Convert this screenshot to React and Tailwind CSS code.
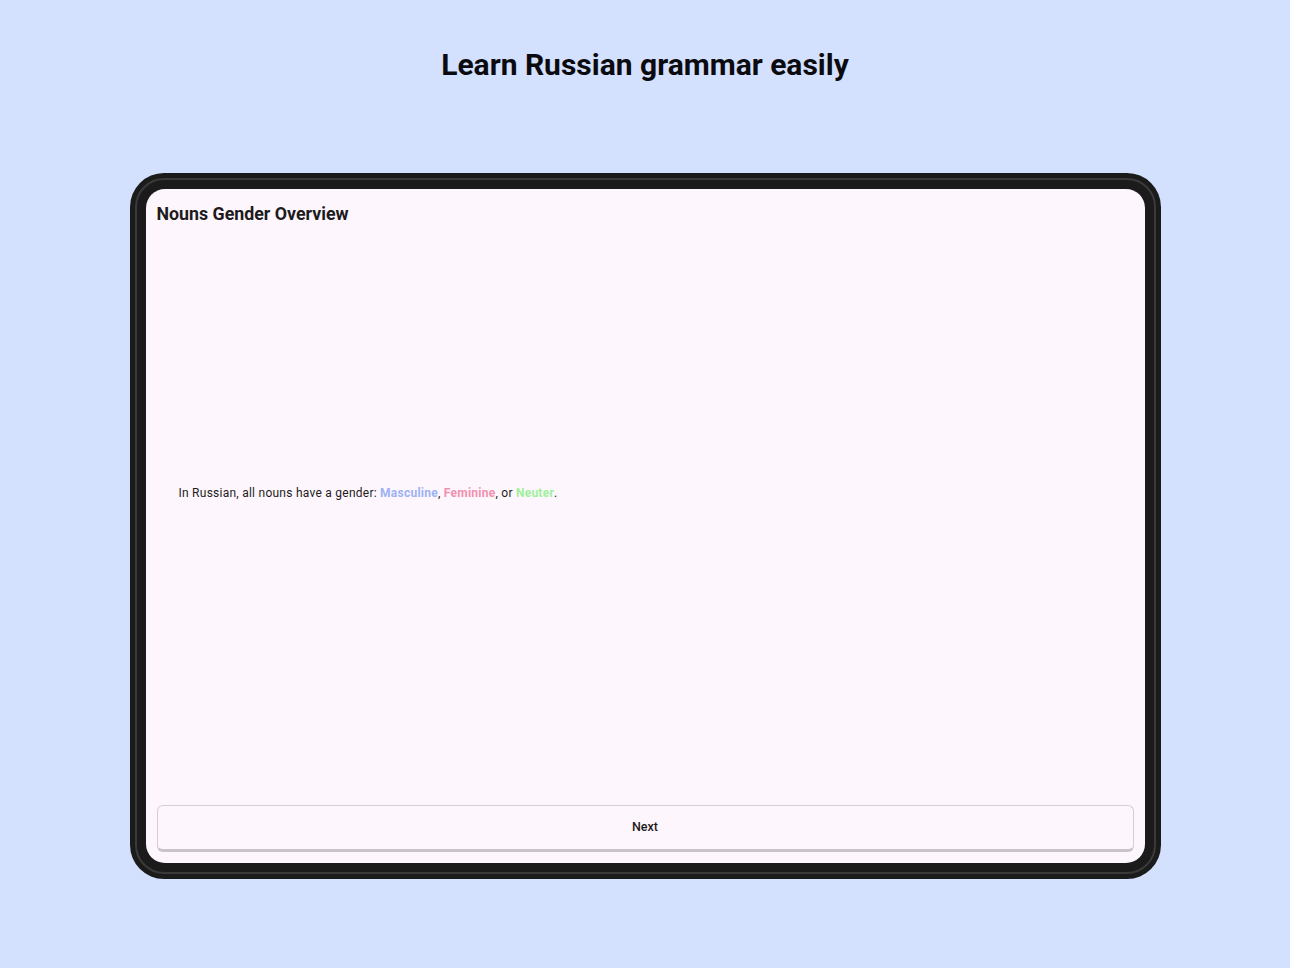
export default function App() {
  return (
    <div
      className="min-h-[968px] w-full bg-[#d3e1fe] flex flex-col items-center"
      style={{ fontFamily: "Roboto, 'Noto Sans', sans-serif" }}
    >
      <h1 className="mt-[45px] h-[40px] text-[30px] leading-[40px] font-bold text-[#0b0b0f]">
        Learn Russian grammar easily
      </h1>
      <div className="mt-[88px] w-[1031px] h-[706px] rounded-[34px] bg-[#1b1b1b] p-[5px]">
        <div className="w-full h-full rounded-[29px] border-2 border-[#3a3a3a] p-[9px]">
          <div className="w-full h-full rounded-[19px] bg-[#fdf7fd] flex flex-col px-[11px] pb-[11px]">
            <h2 className="mt-[13px] text-[17.8px] leading-[24px] font-bold text-[#1d1b20]">
              Nouns Gender Overview
            </h2>
            <div className="flex-1 flex flex-col justify-center px-[22px] pb-[46px]">
              <p className="text-[12px] leading-[18px] tracking-[0.25px] text-[#1d1b20]">
                In Russian, all nouns have a gender:{" "}
                <span className="font-bold text-[#9cb2f4]">Masculine</span>,{" "}
                <span className="font-bold text-[#f28fae]">Feminine</span>, or{" "}
                <span className="font-bold text-[#9ff09a]">Neuter</span>.
              </p>
            </div>
            <button className="h-[47px] w-full rounded-[6px] border border-[#d6ccd6] border-b-[3px] border-b-[#cbc2cc] bg-[#fdf7fd] text-[12.5px] font-medium text-[#1d1b20]">
              Next
            </button>
          </div>
        </div>
      </div>
    </div>
  );
}
